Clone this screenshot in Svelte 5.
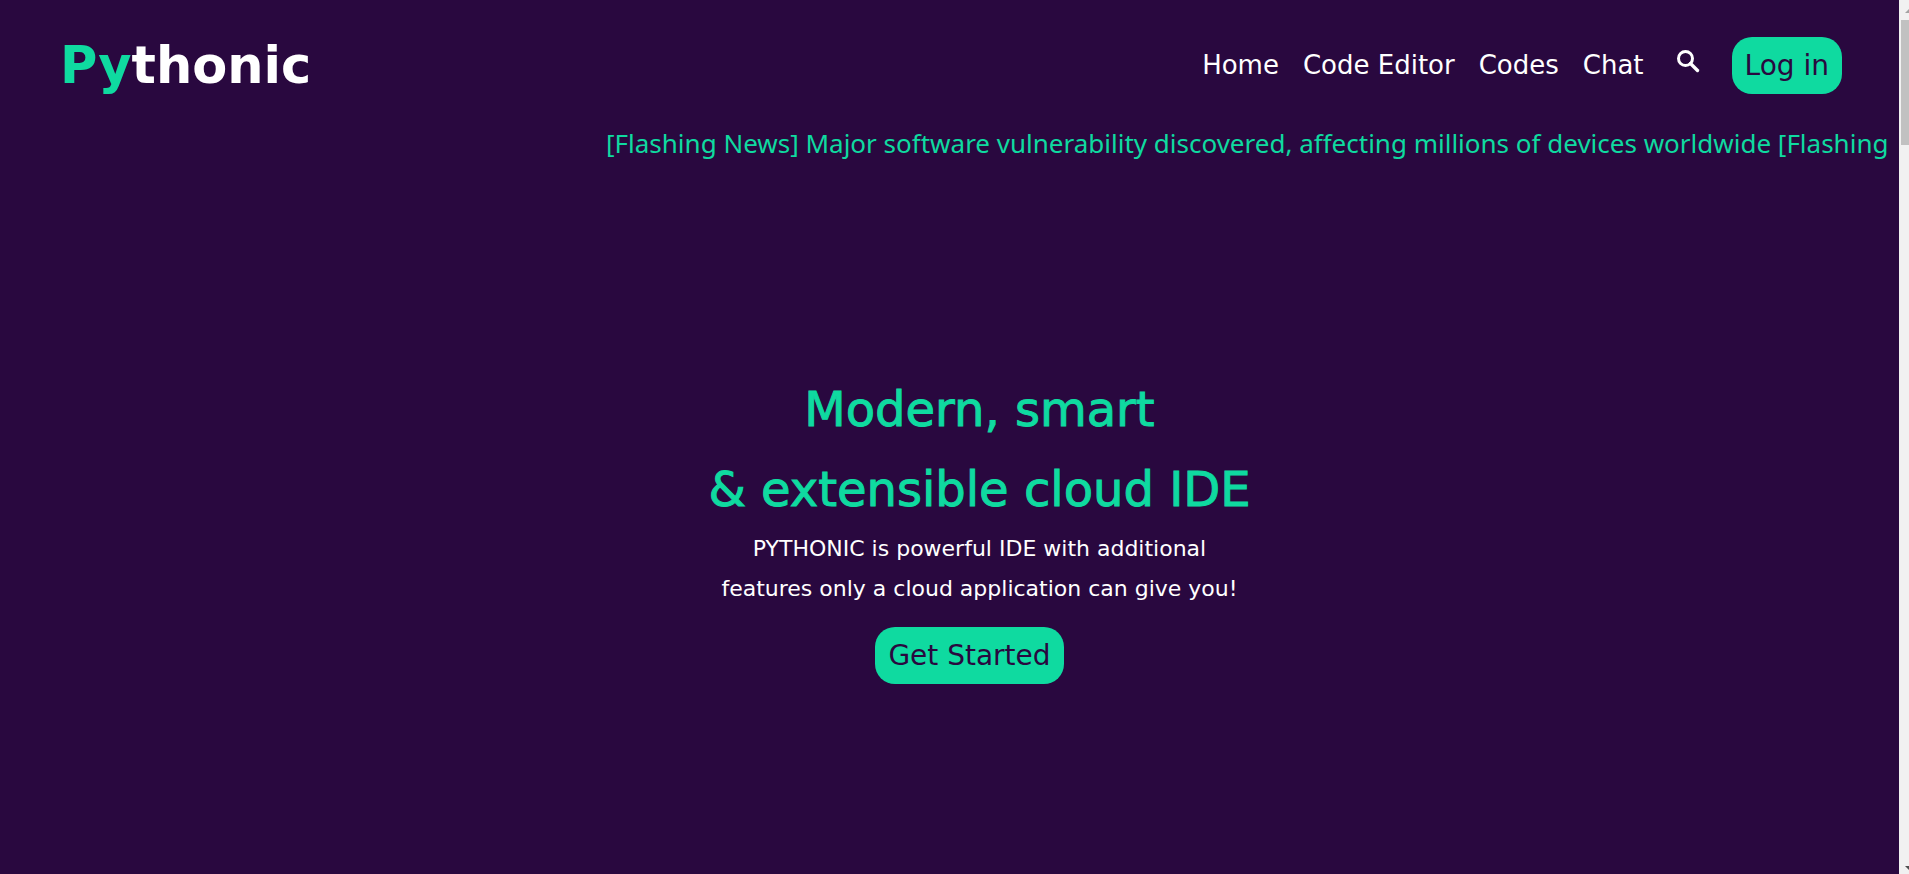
<script>
  const links = ['Home', 'Code Editor', 'Codes', 'Chat'];
  const headline = '[Flashing News] Major software vulnerability discovered, affecting millions of devices worldwide';
</script>

<div class="shell">
  <div class="page">
    <header>
      <a class="logo" href="#home"><span>Py</span>thonic</a>
      <nav aria-label="Main">
        {#each links as link}
          <a href="#{link}">{link}</a>
        {/each}
        <button class="search" aria-label="Search">
          <svg viewBox="0 0 24 24" width="24" height="24" fill="none" stroke="currentColor" stroke-width="3">
            <circle cx="9.5" cy="9.5" r="7" />
            <path d="M14.5 14.5 21.5 21.5" stroke-width="3.4" stroke-linecap="round" />
          </svg>
        </button>
        <button class="pill">Log in</button>
      </nav>
    </header>
    <div class="ticker">{headline} {headline}</div>
    <main>
      <h1>Modern, smart<br />&amp; extensible cloud IDE</h1>
      <p>PYTHONIC is powerful IDE with additional<br />features only a cloud application can give you!</p>
      <button class="pill start">Get Started</button>
    </main>
  </div>
  <div class="scrollbar" aria-hidden="true">
    <svg class="up" width="10" height="20" viewBox="0 0 10 20"><path d="M6 13 10 9V13Z" fill="#a3a3a3" /></svg>
    <div class="thumb"></div>
    <svg class="down" width="10" height="14" viewBox="0 0 10 14"><path d="M6 6H10V10Z" fill="#505050" /></svg>
  </div>
</div>

<style>
  :global(body) {
    margin: 0;
    background: #29083f;
  }
  .shell {
    display: flex;
    min-height: 100vh;
    font-family: 'DejaVu Sans', sans-serif;
    color: #fff;
  }
  .page {
    flex: 1;
    min-width: 0;
    display: flex;
    flex-direction: column;
    background: #29083f;
  }
  header {
    display: flex;
    align-items: center;
    justify-content: space-between;
    height: 58px;
    padding: 36px 57px 15px 60px;
  }
  a {
    color: inherit;
    text-decoration: none;
  }
  .logo {
    font-size: 51px;
    font-weight: 700;
  }
  .logo span {
    color: #0fdaa0;
  }
  nav {
    display: flex;
    align-items: center;
    gap: 24px;
    font-size: 26px;
    white-space: nowrap;
  }
  button {
    border: 0;
    padding: 0;
    background: none;
    color: inherit;
    font: inherit;
    cursor: pointer;
  }
  .search {
    display: flex;
    padding: 0 8px 8px;
  }
  .pill {
    height: 57px;
    padding: 0 13px;
    border-radius: 20px;
    background: #0fdaa0;
    color: #29083f;
    font-size: 28px;
  }
  .ticker {
    margin: 14px 3px 0 606px;
    overflow: hidden;
    white-space: nowrap;
    font-family: 'Noto Sans', sans-serif;
    font-size: 26px;
    line-height: 40px;
    color: #0fdaa0;
  }
  main {
    display: flex;
    flex-direction: column;
    align-items: center;
    padding: 206px 0 0 60px;
    text-align: center;
  }
  h1 {
    margin: 0;
    font-size: 48px;
    font-weight: 400;
    line-height: 80px;
    color: #0fdaa0;
    -webkit-text-stroke: 1px #0fdaa0;
  }
  p {
    margin: 0;
    font-size: 22px;
    line-height: 40px;
  }
  .start {
    margin: 18px 20px 0 0;
  }
  .scrollbar {
    flex: 0 0 10px;
    display: flex;
    flex-direction: column;
    background: #f1f1f1;
  }
  .up,
  .down {
    display: block;
  }
  .thumb {
    height: 125px;
    margin-left: 2px;
    background: #c1c1c1;
  }
  .down {
    margin-top: auto;
  }
</style>
